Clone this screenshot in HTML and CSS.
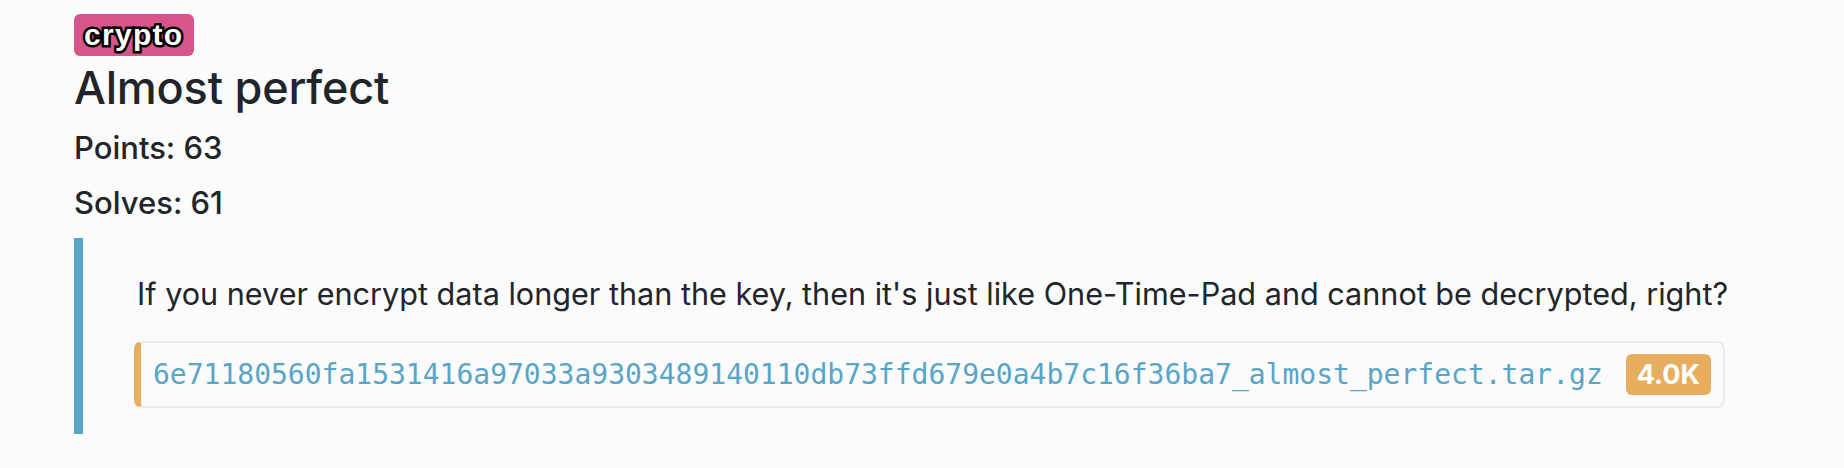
FILE: index.html
```html
<!DOCTYPE html>
<html>
<head>
<meta charset="utf-8">
<link rel="stylesheet" href="styles.css">
</head>
<body>
<div class="challenge">
  <span class="category">crypto</span>
  <h3 class="title">Almost perfect</h3>
  <p class="stat">Points: 63</p>
  <p class="stat">Solves: 61</p>
  <blockquote class="desc">
    <p class="desc-text">If you never encrypt data longer than the key, then it's just like One-Time-Pad and cannot be decrypted, right?</p>
    <div class="file">
      <span class="file-name">6e71180560fa1531416a97033a9303489140110db73ffd679e0a4b7c16f36ba7_almost_perfect.tar.gz</span>
      <span class="file-size">4.0K</span>
    </div>
  </blockquote>
</div>
</body>
</html>
```
FILE: styles.css
```css
html, body {
  margin: 0;
  padding: 0;
  background: #fbfbfb;
}
body {
  font-family: Inter, "Noto Sans", sans-serif;
  color: #212529;
}
.challenge {
  padding: 14px 0 0 74px;
}
.category {
  display: inline-block;
  background: #d6558a;
  border-radius: 6px;
  height: 42px;
  line-height: 42px;
  padding: 0 10px;
  font-family: "Liberation Sans", Arial, sans-serif;
  font-weight: 700;
  font-size: 30px;
  color: #fff;
  -webkit-text-stroke: 5px #000;
  paint-order: stroke fill;
  letter-spacing: 1.3px;
  vertical-align: top;
}
.title {
  margin: 5px 0 10px 0;
  font-size: 45px;
  font-weight: 500;
  line-height: 1.2;
  letter-spacing: -0.2px;
}
.stat {
  margin: 0 0 8px 0;
  font-size: 31px;
  font-weight: 500;
  line-height: 1.5;
}
.desc {
  margin: 12px 0 0 0;
  border-left: 9px solid #58a5c8;
  padding: 33px 0 26px 51px;
}
.desc-text {
  margin: 0 0 23px 3px;
  font-size: 30.6px;
  line-height: 1.52;
}
.file {
  display: inline-flex;
  align-items: center;
  gap: 23px;
  border: 2px solid #ececec;
  border-left: 7px solid #e8ae60;
  border-radius: 8px;
  padding: 11px 12px 11px 12px;
  background: #fbfbfb;
}
.file-name {
  font-family: "DejaVu Sans Mono", monospace;
  font-size: 28px;
  color: #58a5c8;
}
.file-size {
  display: inline-block;
  background: #e8ae60;
  color: #fff;
  font-weight: 700;
  font-size: 27px;
  line-height: 41px;
  height: 41px;
  padding: 0 11px;
  border-radius: 6px;
}
```
